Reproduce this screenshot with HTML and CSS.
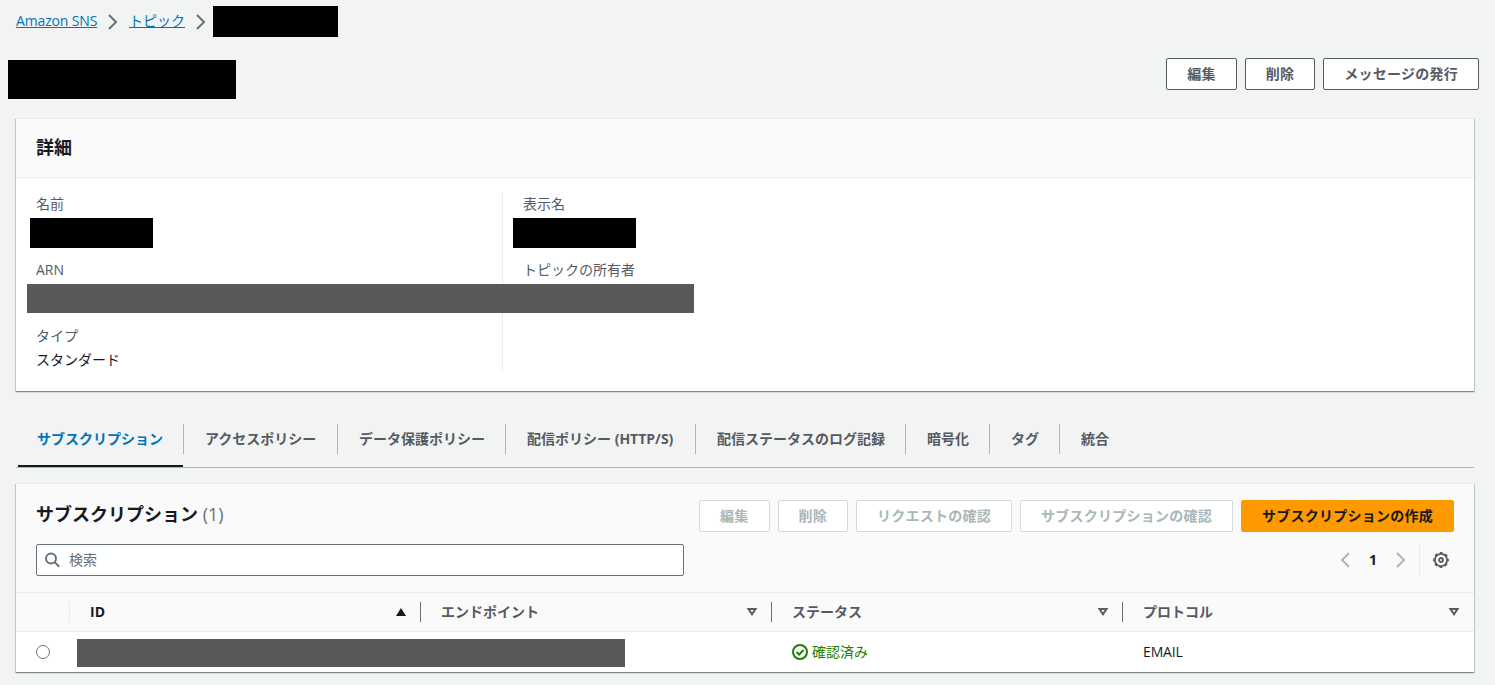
FILE: index.html
```html
<!DOCTYPE html>
<html lang="ja">
  <head>
    <meta charset="UTF-8" />
    <meta name="viewport" content="width=device-width, initial-scale=1.0" />
    <title>Amazon SNS</title>

    <link rel="stylesheet" href="styles.css">
  </head>
  <body>
    <nav class="breadcrumbs">
      <a href="#" class="latin">Amazon SNS</a>
      <svg class="crumb-arrow" width="16" height="16" viewBox="0 0 16 16"><path d="M4 1l7 7-7 7" /></svg>
      <a href="#" class="crumb-topic">トピック</a>
      <svg class="crumb-arrow" width="16" height="16" viewBox="0 0 16 16"><path d="M4 1l7 7-7 7" /></svg>
      <span class="mask mask-crumb"></span>
    </nav>

    <header class="page-header">
      <h1 class="mask mask-title"></h1>
      <div class="actions">
        <button class="btn">編集</button>
        <button class="btn">削除</button>
        <button class="btn">メッセージの発行</button>
      </div>
    </header>

    <section class="card details">
      <div class="details-header">
        <h2>詳細</h2>
      </div>
      <div class="details-body">
        <dl class="column">
          <div class="field">
            <dt>名前</dt>
            <dd><span class="mask mask-name"></span></dd>
          </div>
          <div class="field">
            <dt>ARN</dt>
            <dd><span class="mask mask-arn"></span></dd>
          </div>
          <div class="field">
            <dt>タイプ</dt>
            <dd>スタンダード</dd>
          </div>
        </dl>
        <dl class="column">
          <div class="field">
            <dt>表示名</dt>
            <dd><span class="mask mask-display"></span></dd>
          </div>
          <div class="field">
            <dt>トピックの所有者</dt>
            <dd></dd>
          </div>
        </dl>
      </div>
    </section>

    <ul class="tabs">
      <li class="tab active"><a>サブスクリプション</a></li>
      <li class="tab"><a>アクセスポリシー</a></li>
      <li class="tab"><a>データ保護ポリシー</a></li>
      <li class="tab"><a>配信ポリシー (HTTP/S)</a></li>
      <li class="tab"><a>配信ステータスのログ記録</a></li>
      <li class="tab"><a>暗号化</a></li>
      <li class="tab"><a>タグ</a></li>
      <li class="tab"><a>統合</a></li>
    </ul>

    <section class="card subscriptions">
      <div class="table-tools">
        <div class="tools-row">
          <h2>サブスクリプション <span class="counter">(1)</span></h2>
          <div class="actions">
            <button class="btn" disabled>編集</button>
            <button class="btn" disabled>削除</button>
            <button class="btn" disabled>リクエストの確認</button>
            <button class="btn" disabled>サブスクリプションの確認</button>
            <button class="btn primary">サブスクリプションの作成</button>
          </div>
        </div>
        <div class="tools-row">
          <label class="search">
            <svg width="16" height="16" viewBox="0 0 16 16"><circle cx="6" cy="6.5" r="5" /><path d="M9.6 10.1l4.6 4.6" /></svg>
            <input type="text" placeholder="検索" />
          </label>
          <div class="pagination">
            <svg class="page-arrow" width="16" height="16" viewBox="0 0 16 16"><path d="M12 1L5 8l7 7" /></svg>
            <span class="page-number">1</span>
            <svg class="page-arrow" width="16" height="16" viewBox="0 0 16 16"><path d="M4 1l7 7-7 7" /></svg>
            <span class="settings">
              <svg width="16" height="16" viewBox="0 0 16 16">
                <circle cx="8" cy="8" r="6.1" stroke-width="1.8" />
                <circle class="gear-teeth" cx="8" cy="8" r="7.2" />
                <circle cx="8" cy="8" r="2" stroke-width="1.8" />
              </svg>
            </span>
          </div>
        </div>
      </div>

      <div class="row head">
        <div class="cell select-cell"></div>
        <div class="cell sorted">ID <svg width="12" height="10" viewBox="0 0 12 10"><path d="M6 1l5 8H1z" /></svg></div>
        <div class="cell">エンドポイント <svg width="12" height="10" viewBox="0 0 12 10"><path d="M2.500 2h7L6 7.200z" /></svg></div>
        <div class="cell">ステータス <svg width="12" height="10" viewBox="0 0 12 10"><path d="M2.500 2h7L6 7.200z" /></svg></div>
        <div class="cell">プロトコル <svg width="12" height="10" viewBox="0 0 12 10"><path d="M2.500 2h7L6 7.200z" /></svg></div>
      </div>
      <div class="row">
        <div class="cell select-cell"><span class="radio"></span></div>
        <div class="cell"><span class="mask mask-id"></span></div>
        <div class="cell"></div>
        <div class="cell status">
          <svg width="16" height="16" viewBox="0 0 16 16"><circle cx="8" cy="8" r="7" /><path d="M4.5 8l2.6 2.6 4.4-4.6" /></svg>
          確認済み
        </div>
        <div class="cell latin">EMAIL</div>
      </div>
    </section>
  </body>
</html>
```
FILE: styles.css
```css
* {
  padding: 0;
  margin: 0;
  box-sizing: border-box;
}

body {
  padding: 0 16px;
  min-height: 100vh;
  overflow: hidden;
  background: #f2f3f3;
  color: #16191f;
  font-family: "Open Sans", "Noto Sans CJK JP", sans-serif;
  font-size: 14px;
  line-height: 22px;
}

svg {
  display: block;
  flex-shrink: 0;
  fill: none;
  stroke: currentColor;
  stroke-width: 2;
}

h2 {
  font-size: 18px;
  font-weight: bold;
}

.latin {
  letter-spacing: -0.15px;
}

/* ---- REDACTED VALUES ---- */
.mask {
  display: block;
  background: #000;
}

.mask-crumb {
  width: 125px;
  height: 31px;
  margin-left: 4px;
}

.mask-title {
  width: 228px;
  height: 39px;
  margin: 2px 0 0 -8px;
}

.mask-name,
.mask-display,
.mask-arn,
.mask-id {
  position: absolute;
  top: 1px;
  left: -6px;
  width: 123px;
  height: 30px;
}

.mask-display {
  left: -10px;
}

.mask-arn {
  left: -9px;
  width: 667px;
  height: 29px;
  background: #595959;
  z-index: 1;
}

.mask-id {
  top: 7px;
  left: 7px;
  width: 548px;
  height: 28px;
  background: #595959;
}

/* ---- BREADCRUMBS ---- */
.breadcrumbs {
  display: flex;
  align-items: center;
  height: 31px;
  margin-top: 6px;
}

.breadcrumbs a {
  width: 81px;
  padding-bottom: 2px;
  color: #0073bb;
  white-space: nowrap;
}

.breadcrumbs .crumb-topic {
  width: 56px;
}

.crumb-arrow {
  margin: 0 8px;
  color: #687078;
}

.crumb-topic + .crumb-arrow {
  margin-right: 0;
}

/* ---- PAGE HEADER ---- */
.page-header {
  display: flex;
  justify-content: space-between;
  align-items: flex-start;
  height: 60px;
  margin-top: 21px;
}

.actions {
  display: flex;
  gap: 8px;
}

.btn {
  height: 32px;
  padding: 0 20px;
  border: 1px solid #545b64;
  border-radius: 2px;
  background: #fff;
  color: #545b64;
  font-family: inherit;
  font-size: 14px;
  font-weight: bold;
  line-height: 22px;
  letter-spacing: 0.25px;
  white-space: nowrap;
}

.btn:disabled {
  border-color: #d5dbdb;
  color: #aab7b8;
}

.btn.primary {
  border-color: #f90;
  background: #f90;
  color: #16191f;
}

/* ---- CARDS ---- */
.card {
  width: 1458px;
  background: #fff;
  border-top: 1px solid #eaeded;
  box-shadow: 0 1px 1px 0 rgba(0, 28, 36, 0.3), 1px 1px 1px 0 rgba(0, 28, 36, 0.15), -1px 1px 1px 0 rgba(0, 28, 36, 0.15);
}

.details {
  height: 273px;
}

.details-header {
  display: flex;
  align-items: center;
  height: 59px;
  padding: 0 20px 2px;
  background: #fafafa;
  border-bottom: 1px solid #eaeded;
}

.details-body {
  display: flex;
  padding: 15px 20px 20px;
}

.column {
  width: 466px;
  height: 178px;
  display: flex;
  flex-direction: column;
  gap: 20px;
}

.column + .column {
  padding-left: 20px;
  border-left: 1px solid #eaeded;
}

.field {
  display: flex;
  flex-direction: column;
  gap: 2px;
}

.field dt {
  color: #545b64;
}

.field dd {
  position: relative;
  height: 22px;
}

/* ---- TABS ---- */
.tabs {
  display: flex;
  width: 1458px;
  height: 57px;
  margin: 20px 0 15px;
  border-bottom: 1px solid #aab7b8;
  list-style: none;
}

.tab {
  position: relative;
  height: 56px;
  padding-top: 13px;
  color: #545b64;
  font-weight: bold;
}

.tab a {
  display: block;
  height: 30px;
  padding: 0 20px 0 21px;
  border-right: 1px solid #aab7b8;
  line-height: 30px;
  white-space: nowrap;
}

.tab:nth-child(2) a {
  width: 154px;
}

.tab:nth-child(4) a {
  width: 190px;
}

.tab:last-child a {
  border-right: none;
}

.tab.active {
  color: #0073bb;
}

.tab.active::after {
  content: "";
  position: absolute;
  left: 2px;
  right: 1px;
  bottom: 0;
  height: 2px;
  background: #16191f;
}

/* ---- SUBSCRIPTIONS TABLE ---- */
.table-tools {
  display: flex;
  flex-direction: column;
  gap: 12px;
  height: 108px;
  padding: 16px 20px;
  background: #fafafa;
}

.tools-row {
  display: flex;
  justify-content: space-between;
  height: 32px;
}

.tools-row h2 {
  line-height: 28px;
}

.counter {
  color: #687078;
  font-weight: normal;
}

.search {
  display: flex;
  align-items: center;
  gap: 8px;
  width: 648px;
  padding: 0 8px;
  background: #fff;
  border: 1px solid #687078;
  border-radius: 2px;
  color: #687078;
}

.search input {
  flex: 1;
  border: none;
  outline: none;
  font: inherit;
}

.search input::placeholder {
  color: #687078;
}

.pagination {
  display: flex;
  align-items: center;
}

.page-arrow {
  color: #aab7b8;
}

.page-number {
  width: 40px;
  text-align: center;
  font-weight: bold;
}

.settings {
  display: flex;
  align-items: center;
  height: 32px;
  margin-left: 10px;
  padding: 0 5px 0 13px;
  border-left: 1px solid #eaeded;
  color: #545b64;
}

/* eight teeth round the ring */
.gear-teeth {
  stroke-width: 1.4;
  stroke-dasharray: 3 2.655;
  stroke-dashoffset: 1.5;
}

.row {
  display: grid;
  grid-template-columns: 54px repeat(4, 351px);
  height: 40px;
}

.cell {
  position: relative;
  display: flex;
  align-items: center;
  padding-left: 20px;
}

.head {
  background: #fafafa;
  border-top: 1px solid #eaeded;
  border-bottom: 1px solid #eaeded;
}

.head .cell {
  justify-content: space-between;
  height: 20px;
  margin: 9px 0;
  padding-right: 13px;
  border-right: 1px solid #687078;
  color: #545b64;
  font-weight: bold;
}

.head .select-cell {
  border-color: #eaeded;
}

.head .cell:last-child {
  border-right: none;
  padding-right: 14px;
}

.head .sorted {
  color: #16191f;
}

.sorted svg {
  fill: currentColor;
  stroke: none;
}

.radio {
  width: 14px;
  height: 14px;
  border: 1px solid #687078;
  border-radius: 50%;
  background: #fff;
}

.status {
  gap: 4px;
  color: #1d8102;
}
```
